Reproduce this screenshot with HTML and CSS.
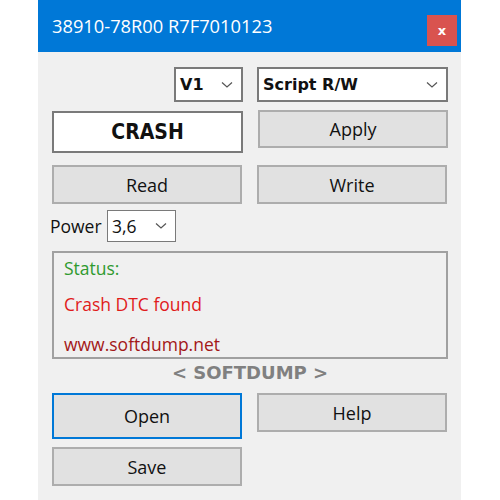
FILE: index.html
```html
<!DOCTYPE html>
<html lang="en">
<head>
<meta charset="UTF-8">
<title>38910-78R00 R7F7010123</title>
<link rel="stylesheet" href="styles.css">
</head>
<body>
<div class="window">
  <div class="titlebar">
    <span class="title">38910-78R00 R7F7010123</span>
    <button class="close">x</button>
  </div>
  <div class="content">
    <div class="row row-select">
      <div class="select select-v">
        <span>V1</span>
        <svg class="chev" width="12" height="8" viewBox="0 0 12 8"><path d="M1 1.5 L6 6 L11 1.5" fill="none" stroke="#555" stroke-width="1.2"/></svg>
      </div>
      <div class="select select-script">
        <span>Script R/W</span>
        <svg class="chev" width="12" height="8" viewBox="0 0 12 8"><path d="M1 1.5 L6 6 L11 1.5" fill="none" stroke="#555" stroke-width="1.2"/></svg>
      </div>
    </div>
    <div class="row row-crash">
      <div class="crash">CRASH</div>
      <button class="btn btn-apply">Apply</button>
    </div>
    <div class="row row-rw">
      <button class="btn">Read</button>
      <button class="btn">Write</button>
    </div>
    <div class="power">
      <span class="power-label">Power</span>
      <div class="select select-power">
        <span>3,6</span>
        <svg class="chev" width="12" height="8" viewBox="0 0 12 8"><path d="M1 1.5 L6 6 L11 1.5" fill="none" stroke="#555" stroke-width="1.2"/></svg>
      </div>
    </div>
    <div class="status">
      <div class="st-green">Status:</div>
      <div class="st-red">Crash DTC found</div>
      <div class="st-dark">www.softdump.net</div>
    </div>
    <div class="brand">&lt; SOFTDUMP &gt;</div>
    <div class="row row-open">
      <button class="btn btn-open">Open</button>
      <button class="btn btn-help">Help</button>
    </div>
    <div class="row row-save">
      <button class="btn">Save</button>
    </div>
  </div>
</div>
</body>
</html>
```

FILE: styles.css
```css
body {
  margin: 0;
  background-color: #fff;
  font-family: "Open Sans", sans-serif;
}
.window {
  margin-left: 38px;
  width: 423px;
  height: 500px;
  background-color: #f0f0f0;
}
.titlebar {
  height: 52px;
  background-color: #0078d7;
  display: flex;
  align-items: center;
  justify-content: space-between;
  padding: 0 4px 0 14px;
}
.title {
  color: #fff;
  font-size: 18.3px;
  margin-top: -2px;
}
.close {
  width: 30px;
  height: 31px;
  margin-top: 8px;
  background-color: #d9534f;
  border: none;
  color: #fff;
  font-family: "DejaVu Sans", sans-serif;
  font-weight: bold;
  font-size: 13px;
  padding: 0;
}
.content {
  padding: 0 13px 0 14px;
}
.row {
  display: flex;
  gap: 15px;
}
.row-select {
  justify-content: flex-end;
  padding-top: 15px;
  gap: 14px;
}
.select {
  box-sizing: border-box;
  height: 35px;
  background-color: #fff;
  border: 2px solid #7a7a7a;
  display: flex;
  align-items: center;
  justify-content: space-between;
  padding: 0 8px 0 4px;
  font-family: "DejaVu Sans", sans-serif;
  font-weight: bold;
  font-size: 16px;
  color: #111;
}
.select-v {
  width: 69px;
}
.select-script {
  width: 191px;
}
.chev {
  display: block;
}
.row-crash {
  margin-top: 8px;
  align-items: flex-start;
}
.crash {
  box-sizing: border-box;
  width: 191px;
  height: 42px;
  margin-top: 1px;
  background-color: #fff;
  border: 2px solid #7a7a7a;
  display: flex;
  align-items: center;
  justify-content: center;
  font-family: "DejaVu Sans Condensed", "DejaVu Sans", sans-serif;
  font-weight: bold;
  font-size: 21px;
  color: #111;
}
.btn {
  box-sizing: border-box;
  width: 190px;
  height: 39px;
  background-color: #e1e1e1;
  border: 2px solid #adadad;
  font-family: "Open Sans", sans-serif;
  font-size: 18px;
  color: #111;
  padding: 0;
}
.btn-apply {
  height: 38px;
}
.row-rw {
  margin-top: 12px;
}
.power {
  display: flex;
  align-items: center;
  margin-top: 6px;
}
.power-label {
  font-size: 17.5px;
  color: #111;
  margin-left: -2px;
  width: 57px;
}
.select-power {
  width: 69px;
  height: 32px;
  border-width: 1px;
  font-family: "Open Sans", sans-serif;
  font-weight: normal;
  font-size: 17.5px;
}
.status {
  box-sizing: border-box;
  width: 396px;
  height: 108px;
  margin-top: 9px;
  border: 2px solid #a0a0a0;
  padding: 3px 10px 0;
  font-size: 17.5px;
  line-height: 24px;
}
.st-green {
  color: #2f9a2f;
}
.st-red {
  color: #e01b1b;
  margin-top: 12px;
}
.st-dark {
  color: #a31717;
  margin-top: 16px;
}
.brand {
  text-align: center;
  font-family: "DejaVu Sans", sans-serif;
  font-weight: bold;
  font-size: 18px;
  color: #808080;
  margin-top: 3px;
  height: 31px;
}
.row-open {
  align-items: flex-start;
}
.btn-open {
  height: 46px;
  border-color: #0078d7;
}
.row-save {
  margin-top: 8px;
}
```
